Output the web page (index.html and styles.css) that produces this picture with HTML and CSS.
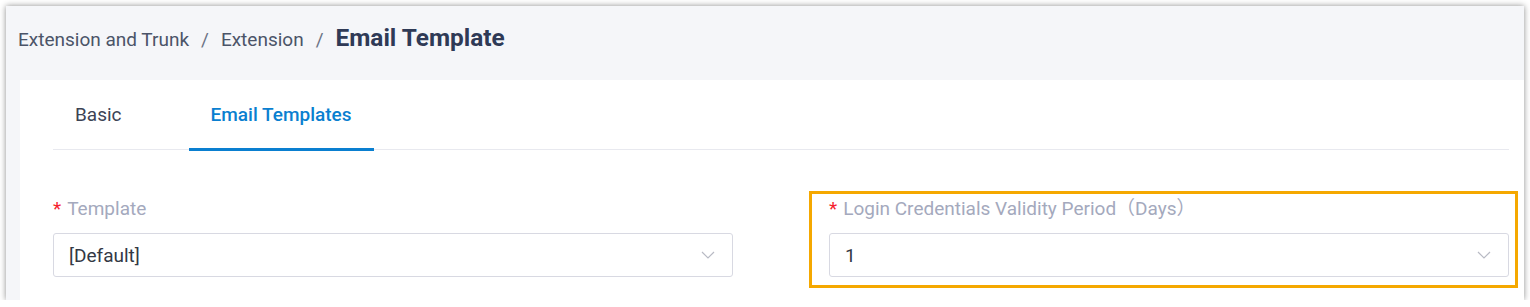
FILE: index.html
```html
<!DOCTYPE html>
<html>
<head>
<meta charset="UTF-8">
<title>Email Template</title>
<link rel="stylesheet" href="styles.css">
</head>
<body>
    <div class="panel">
        <div class="crumbs">
            <span class="crumb">Extension and Trunk</span>
            <span class="sep">/</span>
            <span class="crumb">Extension</span>
            <span class="sep">/</span>
            <span class="current">Email Template</span>
        </div>
        <div class="card">
            <div class="tabs">
                <div class="tab">Basic</div>
                <div class="tab active">Email Templates</div>
            </div>
            <div class="form">
                <div class="field">
                    <div class="label"><span class="req">*</span>Template</div>
                    <div class="select">
                        <span>[Default]</span>
                        <svg class="arrow" width="14" height="8" viewBox="0 0 14 8"><path d="M1 1 L7 7 L13 1" fill="none" stroke="#b8bac4" stroke-width="1.2"/></svg>
                    </div>
                </div>
                <div class="field">
                    <div class="label"><span class="req">*</span>Login Credentials Validity Period（Days）</div>
                    <div class="select">
                        <span>1</span>
                        <svg class="arrow" width="14" height="8" viewBox="0 0 14 8"><path d="M1 1 L7 7 L13 1" fill="none" stroke="#b8bac4" stroke-width="1.2"/></svg>
                    </div>
                    <div class="mark"></div>
                </div>
            </div>
        </div>
    </div>
</body>
</html>
```

FILE: styles.css
```css
body {
    margin: 0;
    background: #fff;
    font-family: Roboto, "Noto Sans CJK SC", sans-serif;
}
.panel {
    margin: 6px 0 0 6px;
    width: 1518px;
    height: 294px;
    background: #f5f6f9;
    box-shadow: 0 0 6px rgba(0, 0, 0, 0.45);
    display: flex;
    flex-direction: column;
}
.crumbs {
    height: 74px;
    box-sizing: border-box;
    padding: 17px 0 0 12px;
    display: flex;
    align-items: baseline;
    font-size: 19px;
    line-height: 30px;
    color: #4b5468;
}
.sep {
    margin: 0 12px;
    color: #6b7385;
}
.current {
    font-size: 24.4px;
    font-weight: bold;
    color: #2f3a56;
}
.card {
    flex: 1;
    margin-left: 14px;
    background: #fff;
    padding: 0 15px 0 33px;
}
.tabs {
    display: flex;
    gap: 45px;
    height: 69px;
    border-bottom: 1px solid #e8e9ef;
}
.tab {
    padding: 1px 22px 0;
    display: flex;
    align-items: center;
    font-size: 19px;
    color: #3c4354;
    border-bottom: 3px solid transparent;
    margin-bottom: -2px;
}
.tab.active {
    color: #0a7fd0;
    font-weight: 500;
    border-bottom-color: #0a7fd0;
}
.form {
    display: grid;
    grid-template-columns: 680px 680px;
    gap: 96px;
    padding-top: 47px;
}
.field {
    position: relative;
}
.label {
    font-size: 19px;
    line-height: 24px;
    color: #a4a9bd;
    margin-bottom: 12px;
}
.req {
    color: #f5222d;
    margin-right: 6px;
}
.select {
    height: 42px;
    border: 1px solid #d8d9e2;
    border-radius: 3px;
    padding: 0 17px 0 15px;
    display: flex;
    align-items: center;
    justify-content: space-between;
    font-size: 19px;
    color: #333844;
}
.mark {
    position: absolute;
    top: -6px;
    left: -20px;
    right: -9px;
    bottom: -11px;
    border: 3px solid #f5a800;
}
```
